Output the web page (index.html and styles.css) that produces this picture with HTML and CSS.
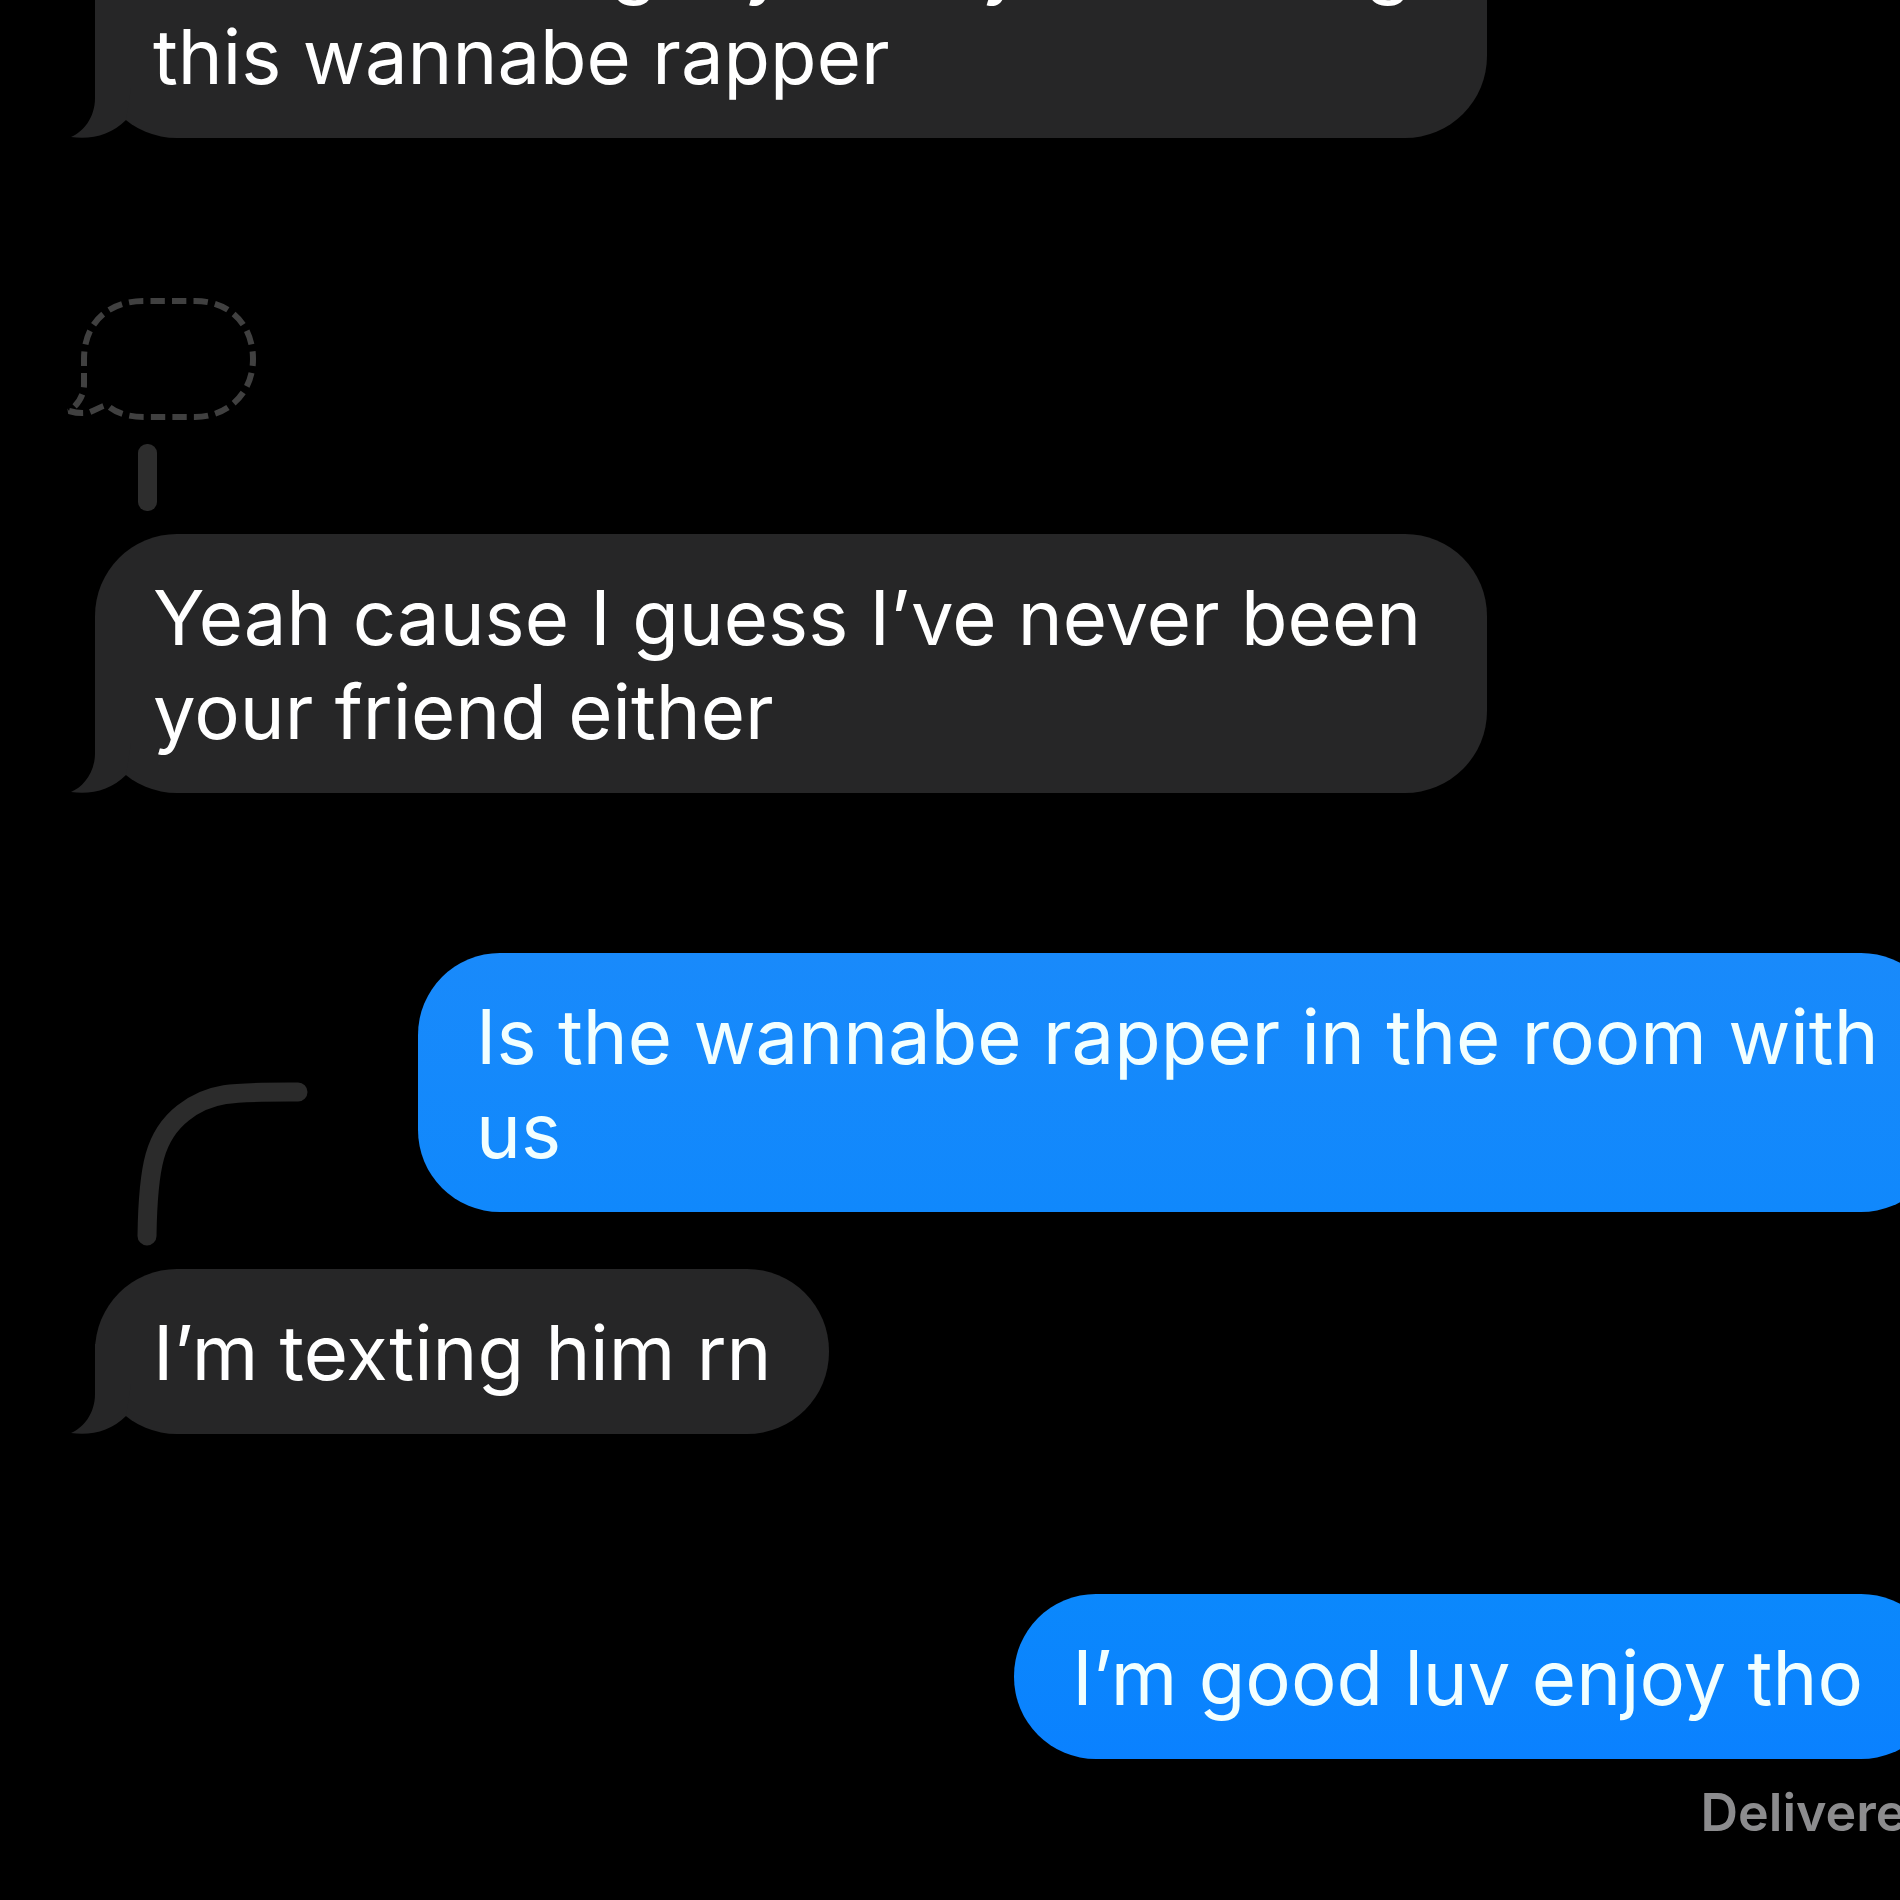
FILE: index.html
```html
<!DOCTYPE html>
<html lang="en">

<head>
    <meta charset="UTF-8">
    <title>Messages</title>
    <link rel="stylesheet" href="styles.css">
</head>

<body>
    <main class="thread">
        <div class="message received">
            <p class="bubble">You’ve having my family for texting this wannabe rapper
                <svg class="tail" viewBox="0 0 60 90"><path d="M24 0V50C24 70 12 84 0 89C20 92 40 87 55 72L60 40V0Z"/></svg>
            </p>
        </div>

        <div class="message received reply">
            <svg class="empty-bubble" viewBox="0 3 200 123">
                <path pathLength="504" d="M112 6H135C172 6 193 32 193 64C193 98 168 122 135 122H85C68 122 56 118 48 111C45 109 40 113 30 117C24 119 16 118 9 116C18 110 24 100 24 90V64C24 28 48 6 84 6Z"/>
            </svg>
            <span class="reply-line"></span>
            <p class="bubble">Yeah cause I guess I’ve never been your friend either
                <svg class="tail" viewBox="0 0 60 90"><path d="M24 0V50C24 70 12 84 0 89C20 92 40 87 55 72L60 40V0Z"/></svg>
            </p>
        </div>

        <div class="message sent">
            <p class="bubble">Is the wannabe rapper in the room with us</p>
        </div>

        <div class="message received reply-to-sent">
            <svg class="reply-curve" viewBox="0 0 180 164">
                <path d="M10 154C11 83 18 53 46 31C73 9 98 10 161 10"/>
            </svg>
            <p class="bubble">I’m texting him rn
                <svg class="tail" viewBox="0 0 60 90"><path d="M24 0V50C24 70 12 84 0 89C20 92 40 87 55 72L60 40V0Z"/></svg>
            </p>
        </div>

        <div class="message sent last">
            <p class="bubble">I’m good luv enjoy tho</p>
            <span class="status">Delivered</span>
        </div>
    </main>
</body>

</html>
```
FILE: styles.css
```css
* {
    box-sizing: border-box;
}

body {
    margin: 0;
    background-color: #000;
    color: #fff;
    font-family: Inter, "Liberation Sans", sans-serif;
    font-size: 76px;
    line-height: 94px;
}

/* newest message stays at the bottom, older ones run off the top */
.thread {
    display: flex;
    flex-direction: column;
    justify-content: flex-end;
    gap: 160px;
    height: 100vh;
    padding: 0 0 55px 95px;
    overflow: hidden;
}

.message {
    display: flex;
    flex-direction: column;
    flex-shrink: 0;
    gap: 23px;
}

.received {
    align-items: flex-start;
}

.sent {
    align-items: flex-end;
    margin-right: -43px;
}

.bubble {
    position: relative;
    margin: 0;
    padding: 36px 58px 35px;
    border-radius: 82px;
}

.received .bubble {
    max-width: 1392px;
    background-color: #262627;
}

.sent .bubble {
    max-width: 1525px;
    background: linear-gradient(#198afb, #1088fc);
    color: #f2ffff;
}

.last .bubble {
    padding-right: 80px;
    background: linear-gradient(#0b88fc, #0a81ff);
}

.tail {
    position: absolute;
    left: -24px;
    bottom: 0;
    width: 60px;
    height: 90px;
    fill: #262627;
}

.empty-bubble {
    width: 200px;
    height: 123px;
    margin-left: -35px;
    fill: none;
    stroke: #404040;
    stroke-width: 6;
    stroke-linejoin: bevel;
    stroke-dasharray: 14 7;
}

.reply-line {
    width: 19px;
    height: 67px;
    margin-left: 43px;
    border-radius: 9px;
    background-color: #2d2d2d;
}

/* the curve reaches up beside the message it answers */
.reply-to-sent {
    margin-top: -290px;
}

.reply-curve {
    width: 180px;
    height: 164px;
    margin-left: 42px;
    fill: none;
    stroke: #2b2b2b;
    stroke-width: 19;
    stroke-linecap: round;
}

.last {
    gap: 22px;
}

.status {
    padding-right: 4px;
    color: #8c8c8e;
    font-size: 52px;
    font-weight: 600;
    line-height: 64px;
}
```
